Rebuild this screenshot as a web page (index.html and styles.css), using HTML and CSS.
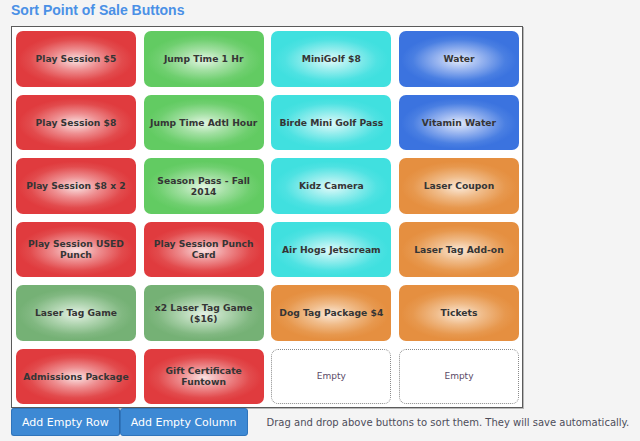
FILE: index.html
```html
<!DOCTYPE html>
<html lang="en">
<head>
<meta charset="utf-8">
<title>Sort Point of Sale Buttons</title>
<link rel="stylesheet" href="styles.css">
</head>
<body>
<div class="page">
  <h1 class="title">Sort Point of Sale Buttons</h1>
  <div class="board">
    <div class="pos red">Play Session $5</div>
    <div class="pos green">Jump Time 1 Hr</div>
    <div class="pos cyan">MiniGolf $8</div>
    <div class="pos blue">Water</div>

    <div class="pos red">Play Session $8</div>
    <div class="pos green">Jump Time Adtl Hour</div>
    <div class="pos cyan">Birde Mini Golf Pass</div>
    <div class="pos blue">Vitamin Water</div>

    <div class="pos red">Play Session $8 x 2</div>
    <div class="pos green">Season Pass - Fall 2014</div>
    <div class="pos cyan">Kidz Camera</div>
    <div class="pos orange">Laser Coupon</div>

    <div class="pos red">Play Session USED Punch</div>
    <div class="pos red">Play Session Punch Card</div>
    <div class="pos cyan">Air Hogs Jetscream</div>
    <div class="pos orange">Laser Tag Add-on</div>

    <div class="pos sage">Laser Tag Game</div>
    <div class="pos sage">x2 Laser Tag Game ($16)</div>
    <div class="pos orange">Dog Tag Package $4</div>
    <div class="pos orange">Tickets</div>

    <div class="pos red">Admissions Package</div>
    <div class="pos red">Gift Certificate Funtown</div>
    <div class="pos empty">Empty</div>
    <div class="pos empty">Empty</div>
  </div>
  <div class="actions">
    <button class="add first">Add Empty Row</button>
    <button class="add">Add Empty Column</button>
    <span class="hint">Drag and drop above buttons to sort them. They will save automatically.</span>
  </div>
</div>
</body>
</html>
```

FILE: styles.css
```css
html, body {
  margin: 0;
  padding: 0;
  background: #f4f4f4;
}

.page {
  padding: 2px 0 0 11px;
}

.title {
  margin: 0 0 8px 0;
  font-family: "Liberation Sans", Arial, sans-serif;
  font-size: 14px;
  line-height: 16px;
  font-weight: bold;
  color: #4a90e6;
}

.board {
  width: 503px;
  padding: 4px 3px 3px 4px;
  background: #ffffff;
  border: 1px solid #5a5a5a;
  box-shadow: 1px 1px 0 #b8b8b8;
  display: grid;
  grid-template-columns: repeat(4, 120px);
  grid-auto-rows: 55.5px;
  column-gap: 7.67px;
  row-gap: 8px;
}

.pos {
  display: flex;
  align-items: center;
  justify-content: center;
  text-align: center;
  box-sizing: border-box;
  padding: 0 6px;
  border-radius: 7px;
  font-family: "DejaVu Sans", Verdana, sans-serif;
  font-size: 9.2px;
  line-height: 11px;
  font-weight: bold;
  color: #353535;
}

.red {
  background: radial-gradient(ellipse 48% 46% at 50% 52%, #fae2e2 0%, #ee8e90 40%, #e24b4d 80%, #e03b3e 100%);
  background-color: #e03b3e;
}

.green {
  background: radial-gradient(ellipse 48% 46% at 50% 52%, #e3f6e3 0%, #a3e0a3 40%, #6fcf6f 80%, #62cb62 100%);
  background-color: #62cb62;
}

.cyan {
  background: radial-gradient(ellipse 48% 46% at 50% 52%, #e0fafa 0%, #95eded 40%, #4ee2e2 80%, #40e0df 100%);
  background-color: #40e0df;
}

.blue {
  background: radial-gradient(ellipse 48% 46% at 50% 52%, #e2eafb 0%, #96b3ef 40%, #4a7fe2 80%, #3b73df 100%);
  background-color: #3b73df;
}

.orange {
  background: radial-gradient(ellipse 48% 46% at 50% 52%, #fbe9d8 0%, #f0bc8a 40%, #e7984e 80%, #e58f40 100%);
  background-color: #e58f40;
}

.sage {
  background: radial-gradient(ellipse 48% 46% at 50% 52%, #e4f1e4 0%, #b1d5b1 40%, #81b881 80%, #75b175 100%);
  background-color: #75b175;
}

.empty {
  background: #ffffff;
  border: 1px dotted #8a8a8a;
  font-weight: normal;
  font-size: 9px;
  color: #5a4a66;
}

.actions {
  display: flex;
  align-items: center;
}

.add {
  height: 28px;
  margin: 0;
  padding: 0 10px;
  background: #3d89d4;
  border: 1px solid #2f74bb;
  border-radius: 3px;
  color: #ffffff;
  font-family: "DejaVu Sans", Verdana, sans-serif;
  font-size: 11px;
  cursor: pointer;
}

.add.first {
  border-right-color: #2a67a8;
}

.hint {
  margin-left: 19px;
  font-family: "DejaVu Sans", Verdana, sans-serif;
  font-size: 10px;
  color: #4d4d5a;
}
```
